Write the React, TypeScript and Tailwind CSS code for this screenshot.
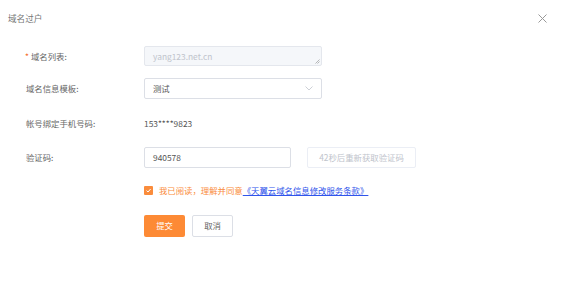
import React from 'react';

const font = { fontFamily: '"Noto Sans CJK SC", "Noto Sans", sans-serif' };

const Row: React.FC<{ label: React.ReactNode; className?: string; children: React.ReactNode }> = ({ label, className, children }) => (
  <div className={`flex items-center ${className ?? ''}`}>
    <div className="w-[118px] shrink-0 text-[8.4px] text-[#666]">{label}</div>
    {children}
  </div>
);

const App: React.FC = () => {
  return (
    <div className="w-[564px] h-[281px] bg-white relative" style={font}>
      {/* Header */}
      <div className="flex items-center justify-between pl-2 pr-[17px] pt-[12px]">
        <span className="text-[8.6px] text-[#777]">域名过户</span>
        <svg width="9" height="9" viewBox="0 0 9 9" className="mt-[1px]">
          <path d="M0.5 0.5 L8.5 8.5 M8.5 0.5 L0.5 8.5" stroke="#999" strokeWidth="1" />
        </svg>
      </div>

      {/* Form */}
      <div className="pl-[26px] pt-[21px] flex flex-col">
        <Row label={<><span className="text-[#f56c2c] mr-[2px] ml-[-1px]">*</span>域名列表:</>}>
          <div className="relative w-[178px] h-[20px] rounded-[2px] border border-[#e4e7ed] bg-[#f5f7fa] flex items-center px-[8px] text-[8.4px] text-[#c0c4cc]">
            yang123.net.cn
            <svg width="5" height="5" viewBox="0 0 5 5" className="absolute right-[1px] bottom-[1px]">
              <path d="M4.5 0.5 L0.5 4.5 M4.5 2.5 L2.5 4.5" stroke="#999" strokeWidth="0.7" />
            </svg>
          </div>
        </Row>

        <Row label="域名信息模板:" className="mt-[12px]">
          <div className="w-[178px] h-[21px] rounded-[2px] border border-[#dcdfe6] bg-white flex items-center justify-between px-[8px] text-[8.4px] text-[#555]">
            <span>测试</span>
            <svg width="8" height="5" viewBox="0 0 8 5">
              <path d="M0.5 0.5 L4 4 L7.5 0.5" stroke="#c0c4cc" strokeWidth="0.8" fill="none" />
            </svg>
          </div>
        </Row>

        <Row label="帐号绑定手机号码:" className="mt-[14px] h-[20px]">
          <span className="text-[8.4px] text-[#555]">153****9823</span>
        </Row>

        <Row label="验证码:" className="mt-[14px]">
          <div className="w-[147px] h-[21px] rounded-[2px] border border-[#dcdfe6] bg-white flex items-center px-[8px] text-[8.4px] text-[#555]">
            940578
          </div>
          <div className="ml-[16px] w-[109px] h-[21px] rounded-[2px] border border-[#ebeef5] bg-white flex items-center justify-center text-[8.4px] text-[#c0c4cc]">
            42秒后重新获取验证码
          </div>
        </Row>

        <Row label="" className="mt-[16px]">
          <div className="flex items-center">
            <div className="w-[9px] h-[9px] rounded-[1px] bg-[#fa8c3c] flex items-center justify-center">
              <svg width="7" height="7" viewBox="0 0 7 7">
                <path d="M1.5 3.6 L3 5 L5.6 2" stroke="#fff" strokeWidth="1" fill="none" />
              </svg>
            </div>
            <span className="ml-[6px] text-[8.4px] text-[#fa8c3c]">我已阅读，理解并同意</span>
            <span className="text-[8.4px] text-[#2f54eb] underline">《天翼云域名信息修改服务条款》</span>
          </div>
        </Row>

        <Row label="" className="mt-[18px]">
          <button className="w-[41px] h-[22px] rounded-[2px] bg-[#fd8a35] text-white text-[8.4px]">提交</button>
          <button className="ml-[7px] w-[41px] h-[22px] rounded-[2px] border border-[#dcdfe6] bg-white text-[#666] text-[8.4px]">取消</button>
        </Row>
      </div>
    </div>
  );
};

export default App;
